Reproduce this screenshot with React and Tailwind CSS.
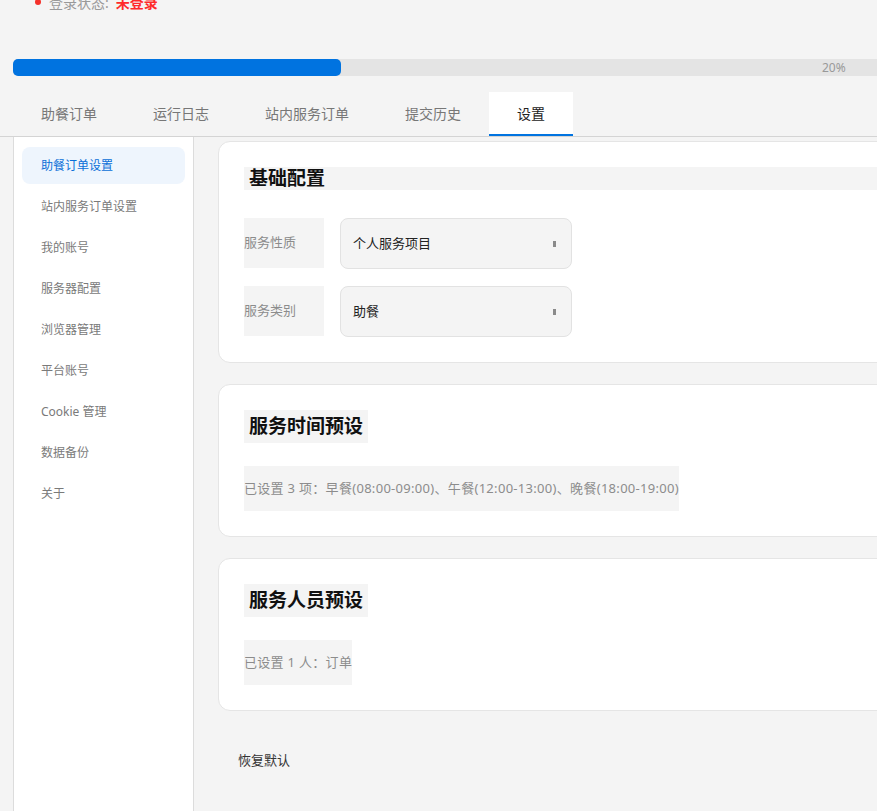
const tabs = ['助餐订单', '运行日志', '站内服务订单', '提交历史', '设置'];

const menu = [
  '助餐订单设置',
  '站内服务订单设置',
  '我的账号',
  '服务器配置',
  '浏览器管理',
  '平台账号',
  'Cookie 管理',
  '数据备份',
  '关于',
];

function SelectBox({ value }) {
  return (
    <div className="w-[232px] h-[51px] rounded-[8px] border border-[#e2e2e2] bg-[#f4f4f4] pl-[12px] pr-[15px] flex items-center justify-between">
      <span className="text-[13px] text-[#222]">{value}</span>
      <span className="w-[3px] h-[6px] bg-[#8a8a8a]" />
    </div>
  );
}

function FieldRow({ label, value }) {
  return (
    <div className="flex gap-[16px]">
      <div className="w-[80px] h-[50px] bg-[#f4f4f4] flex items-center text-[13px] text-[#8c8c8c]">
        {label}
      </div>
      <SelectBox value={value} />
    </div>
  );
}

function PresetCard({ title, summary }) {
  return (
    <div className="mt-[21px] rounded-[12px] border border-[#e5e5e5] bg-white p-[25px]">
      <div>
        <span className="inline-block h-[33px] px-[5px] leading-[33px] bg-[#f4f4f4] text-[19px] font-bold text-[#111]">
          {title}
        </span>
      </div>
      <div className="mt-[23px]">
        <span className="inline-flex items-center h-[45px] bg-[#f4f4f4] text-[13px] tracking-[0.3px] text-[#8c8c8c]">
          {summary}
        </span>
      </div>
    </div>
  );
}

export default function App() {
  return (
    <div className="w-[877px] h-[811px] overflow-hidden bg-[#f4f4f4] font-[family-name:'Noto_Sans','Noto_Sans_CJK_SC',sans-serif]">
      <div className="w-[960px] -mt-[8px]">
        {/* login status */}
        <div className="h-[20px] pl-[35px] flex items-center text-[14px]">
          <span className="w-[6px] h-[6px] rounded-full bg-[#f5312a]" />
          <span className="ml-[8px] text-[#999]">登录状态:</span>
          <span className="ml-[7px] font-bold text-[#ff2a2a]">未登录</span>
        </div>

        {/* progress */}
        <div className="relative mt-[47px] ml-[13px] h-[17px] rounded-[5px] bg-[#e4e4e4] flex items-center">
          <div className="w-[328px] h-full rounded-[5px] bg-[#0073e0]" />
          <span className="absolute left-[809px] text-[12px] text-[#999]">20%</span>
        </div>

        {/* tabs */}
        <div className="mt-[16px] pl-[13px] flex border-b border-[#d4d4d4]">
          {tabs.map((t) => {
            const active = t === '设置';
            return (
              <div
                key={t}
                className={
                  active
                    ? 'h-[44px] px-[28px] flex items-center bg-white border-b-2 border-[#0073e0] text-[14px] text-[#222]'
                    : 'h-[44px] px-[28px] flex items-center border-b-2 border-transparent text-[14px] text-[#777]'
                }
              >
                {t}
              </div>
            );
          })}
        </div>

        <div className="flex">
          {/* sidebar */}
          <div className="ml-[13px] w-[181px] h-[700px] bg-white border-l border-r border-[#dcdcdc] px-[8px] pt-[10px] flex flex-col gap-[4px]">
            {menu.map((m, i) => (
              <div
                key={m}
                className={
                  i === 0
                    ? 'h-[37px] rounded-[8px] bg-[#eef5fd] pl-[19px] flex items-center text-[12px] text-[#0a6fd8]'
                    : 'h-[37px] rounded-[8px] pl-[19px] flex items-center text-[12px] text-[#7a7a7a]'
                }
              >
                {m}
              </div>
            ))}
          </div>

          {/* content */}
          <div className="flex-1 pl-[24px] pr-[20px] pt-[4px]">
            <div className="rounded-[12px] border border-[#e5e5e5] bg-white p-[25px]">
              <div className="h-[23px] leading-[23px] bg-[#f4f4f4] pl-[5px] text-[19px] font-bold text-[#111]">
                基础配置
              </div>
              <div className="mt-[28px] flex flex-col gap-[17px]">
                <FieldRow label="服务性质" value="个人服务项目" />
                <FieldRow label="服务类别" value="助餐" />
              </div>
            </div>

            <PresetCard
              title="服务时间预设"
              summary="已设置 3 项：早餐(08:00-09:00)、午餐(12:00-13:00)、晚餐(18:00-19:00)"
            />
            <PresetCard title="服务人员预设" summary="已设置 1 人：订单" />

            <div className="mt-[39px] ml-[20px] text-[13px] leading-[20px] text-[#333]">恢复默认</div>
          </div>
        </div>
      </div>
    </div>
  );
}
